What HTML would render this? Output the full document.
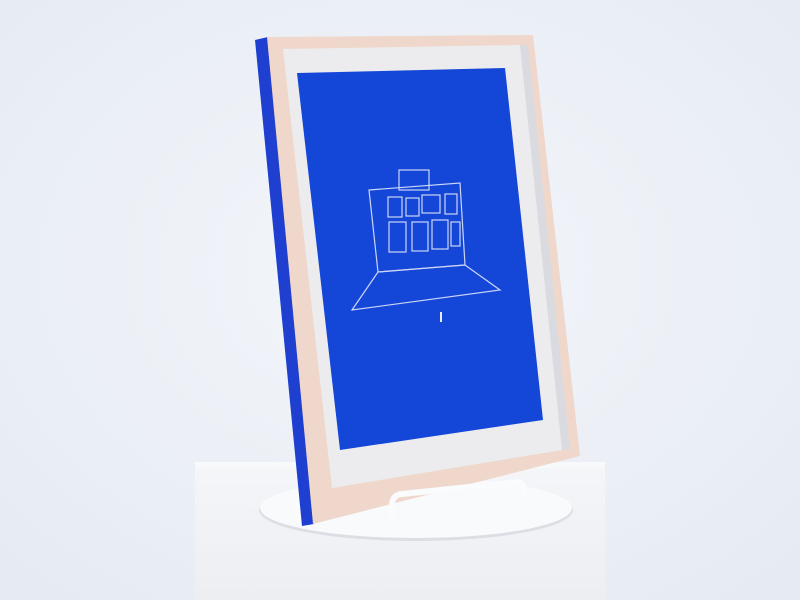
<!DOCTYPE html>
<html><head><style>
html,body{margin:0;padding:0;width:800px;height:600px;overflow:hidden;background:#eef2f8}
</style></head><body>
<svg width="800" height="600" viewBox="0 0 800 600" xmlns="http://www.w3.org/2000/svg">
<defs>
<radialGradient id="bg" cx="0.5" cy="0.45" r="0.7">
<stop offset="0" stop-color="#f3f6fa"/><stop offset="1" stop-color="#e6ebf3"/>
</radialGradient>
<linearGradient id="ped" x1="0" y1="0" x2="0" y2="1">
<stop offset="0" stop-color="#f5f6f9"/><stop offset="1" stop-color="#eceef2"/>
</linearGradient>
</defs>
<rect width="800" height="600" fill="url(#bg)"/>
<rect x="195" y="462" width="410" height="138" fill="url(#ped)"/>
<polygon points="195,462 605,462 605,468 195,468" fill="#f8f9fb"/>
<ellipse cx="416" cy="510" rx="157" ry="31" fill="#dcdee4"/>
<ellipse cx="416" cy="508" rx="156" ry="30" fill="#f9fafc"/>
<polygon points="255,40 268,37 314,524 302,526" fill="#1e3fcf"/>
<polygon points="267,37 533,35 580,456 313,524" fill="#efd8cb"/>
<polygon points="283,49 520,45 562,450 332,488" fill="#ececee"/>
<polygon points="520,45 528,46 570,450 562,450" fill="#d9dbe0"/>
<polygon points="297,73 505,68 543,420 340,450" fill="#1446d8"/>
<g fill="none" stroke="#dfe6fb" stroke-width="1.2" opacity="0.9">
<rect x="399" y="170" width="30" height="20"/>
<polygon points="369,190 460,183 465,265 378,272"/>
<polygon points="378,272 465,265 500,290 352,310"/>
<rect x="388" y="197" width="14" height="20"/>
<rect x="406" y="198" width="13" height="18"/>
<rect x="422" y="195" width="18" height="18"/>
<rect x="445" y="194" width="12" height="20"/>
<rect x="389" y="222" width="17" height="30"/>
<rect x="412" y="222" width="16" height="29"/>
<rect x="432" y="220" width="16" height="29"/>
<rect x="451" y="222" width="9" height="24"/>
</g>
<rect x="440" y="312" width="2" height="10" fill="#e6ecfb"/>
<path d="M392,520 L392,505 Q392,495 402,494 L516,482 Q524,482 524,490 L524,496" fill="none" stroke="#fafbfc" stroke-width="6"/>
</svg>
</body></html>
